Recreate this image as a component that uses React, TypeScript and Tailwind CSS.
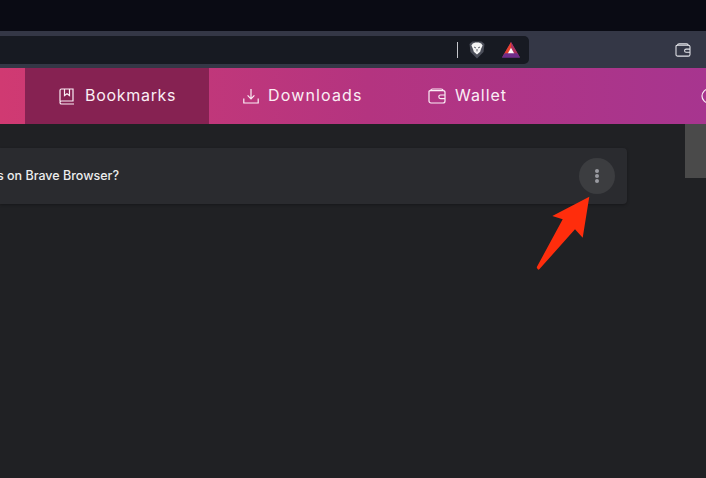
function WalletIcon({ className }: { className: string }) {
  return (
    <svg viewBox="0 0 18 16" fill="none" stroke="currentColor" strokeWidth="1.2" className={className}>
      <path d="M2.6 2.6 C2.8 1.4 3.6 1 4.6 1 H13 C14.2 1 15 1.6 15 2.8" />
      <path d="M1 3.6 C1 2.8 1.6 2.6 2.6 2.6 H15 C16.2 2.6 17 3.3 17 4.4 V13 C17 14.2 16.2 15 15 15 H3 C1.8 15 1 14.2 1 13 Z" />
      <path d="M17 7 H12.6 C11.4 7 10.8 7.8 10.8 8.8 C10.8 9.8 11.4 10.6 12.6 10.6 H17" />
    </svg>
  );
}

function BookIcon() {
  return (
    <svg viewBox="0 0 16 17" fill="none" stroke="currentColor" strokeWidth="1.2" className="w-4 h-[17px]">
      <path d="M1 13.6 V2.4 C1 1.4 1.6 1 2.4 1 H14 V13 H2.6 C1.6 13 1 13.6 1 14.4 C1 15.3 1.6 16 2.6 16 H15" />
      <path d="M5.5 1 V7.5 L8 5.8 L10.5 7.5 V1" />
    </svg>
  );
}

function DownloadIcon() {
  return (
    <svg viewBox="0 0 16 16" fill="none" stroke="currentColor" strokeWidth="1.2" className="w-4 h-4">
      <path d="M8 1 V10.5 M4.6 7.4 L8 10.8 L11.4 7.4" />
      <path d="M0.8 10.5 V15 H15.2 V10.5" />
    </svg>
  );
}

function BraveIcon() {
  return (
    <svg viewBox="0 0 16 18" className="w-4 h-[18px]">
      <path d="M3.5 0.5 H12.5 L15.5 3 L14.5 11 L8 17.5 L1.5 11 L0.5 3 Z" fill="#4b4e59" />
      <path d="M3.8 2.6 L6.3 1.6 H9.7 L12.2 2.6 L13.6 4.4 L12 8 L11.2 10.8 L8 13.6 L4.8 10.8 L4 8 L2.4 4.4 Z" fill="#f4f4f4" />
      <path d="M5 6 L7 7 M11 6 L9 7 M8 8 V10.4" stroke="#4b4e59" strokeWidth="0.9" />
    </svg>
  );
}

function BatIcon() {
  return (
    <svg viewBox="0 0 18 16" className="w-[18px] h-4">
      <path d="M9 0 L0 15.5 H18 Z" fill="#7a2f86" />
      <path d="M9 0 L0 15.5 L2.9 11.6 H6 L9 6.2 Z" fill="#e8412c" />
      <path d="M9 0 L9 6.2 L12 11.6 H15.1 L18 15.5 Z" fill="#b0325e" />
      <path d="M9 5.8 L5.8 11.6 H12.2 Z" fill="#ffffff" />
      <path d="M0 15.5 L2.9 11.6 H15.1 L18 15.5 Z" fill="#6f2d8a" />
    </svg>
  );
}

function NavItem({ icon, label, className }: { icon: React.ReactNode; label: string; className: string }) {
  return (
    <div className={`flex items-center h-full text-[#fbeef5] text-[16px] font-['Inter',sans-serif] ${className}`}>
      {icon}
      <span className="mb-0.5">{label}</span>
    </div>
  );
}

export default function App() {
  return (
    <div className="w-[706px] h-[478px] overflow-hidden flex flex-col bg-[#202124] font-['Inter',sans-serif]">
      <div className="h-[31px] shrink-0 bg-[#0a0b14]" />
      <div className="h-[37px] shrink-0 bg-[#343746] flex items-center">
        <div className="w-[529px] h-[28px] rounded-r-[5px] bg-[#171a22] flex items-center">
          <div className="ml-[457px] w-px h-4 bg-[#c5c7cc]" />
          <div className="ml-[11px] flex"><BraveIcon /></div>
          <div className="ml-[17px] flex"><BatIcon /></div>
        </div>
        <WalletIcon className="ml-[146px] w-4 h-[14px] text-[#e4e5ea]" />
      </div>
      <div className="h-[56px] shrink-0 flex items-center bg-gradient-to-r from-[#d03a72] via-[#b43480] via-[52%] to-[#a7358f]">
        <div className="w-[25px] shrink-0" />
        <NavItem
          label="Bookmarks"
          className="w-[184px] shrink-0 pl-[34px] gap-[10px] bg-[#862252] tracking-[0.7px]"
          icon={<BookIcon />}
        />
        <NavItem
          label="Downloads"
          className="w-[185px] shrink-0 pl-[34px] gap-[9px] tracking-[1.15px]"
          icon={<DownloadIcon />}
        />
        <NavItem
          label="Wallet"
          className="w-[307px] shrink-0 pl-[34px] gap-[9px] tracking-[0.95px]"
          icon={<WalletIcon className="w-[18px] h-4" />}
        />
        <div className="w-[40px] shrink-0 flex items-center">
          <svg viewBox="0 0 16 16" fill="none" stroke="#fbeef5" strokeWidth="1.2" className="w-4 h-4 shrink-0">
            <circle cx="8" cy="8" r="7" />
          </svg>
        </div>
      </div>
      <div className="relative flex-1 flex items-start">
        <div className="w-[627px] h-[56px] mt-6 shrink-0 rounded-r-[4px] bg-[#2a2b2f] shadow-[0_1px_3px_rgba(0,0,0,0.3)] flex items-center justify-between pr-3">
          <span className="text-[12.5px] text-[#eceded] font-medium whitespace-nowrap ml-[-3px] mt-px font-['Inter',sans-serif]">
            s on Brave Browser?
          </span>
          <div className="w-9 h-9 rounded-full bg-[#3c3d40] flex flex-col items-center justify-center gap-[1.5px]">
            <span className="w-[3.5px] h-[3.5px] rounded-full bg-[#9a9ba1]" />
            <span className="w-[3.5px] h-[3.5px] rounded-full bg-[#9a9ba1]" />
            <span className="w-[3.5px] h-[3.5px] rounded-full bg-[#9a9ba1]" />
          </div>
        </div>
        <div className="ml-auto w-[21px] h-[54px] bg-[#4a4a4a]" />
        <svg
          viewBox="0 0 60 80"
          className="absolute left-[534px] top-[69px] w-[60px] h-[80px]"
        >
          <path
            d="M55.3 3.7 L18.3 23 L28.7 26.3 L2.7 74.3 Q3.8 77.5 5.3 76.3 L41 36.3 L48.7 44.7 Z"
            fill="#ff2d0c"
          />
        </svg>
      </div>
    </div>
  );
}
